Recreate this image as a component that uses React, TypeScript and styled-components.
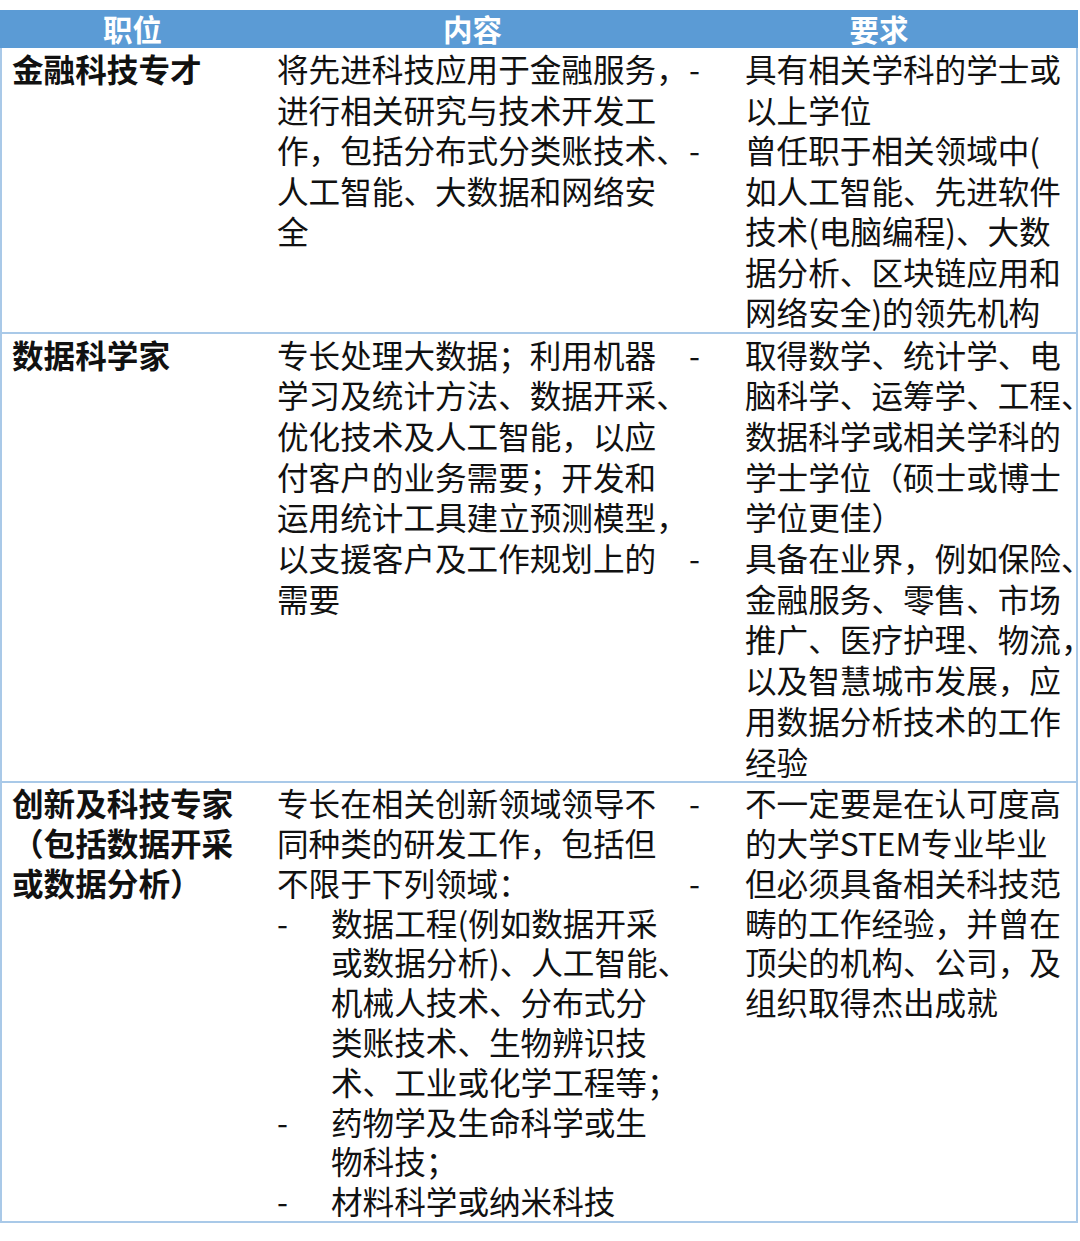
import { Fragment } from 'react';
import styled, { createGlobalStyle } from 'styled-components';

const GlobalStyle = createGlobalStyle`
  body {
    margin: 0;
    background: #ffffff;
    font-family: "Noto Sans CJK SC", "Noto Sans", sans-serif;
    color: #111111;
  }
`;

interface ListItem {
  lines: string[];
}

interface RowData {
  title: string[];
  content: string[];
  subList?: ListItem[];
  requirements: ListItem[];
  lineHeight: number;
}

const rows: RowData[] = [
  {
    title: ['金融科技专才'],
    lineHeight: 40.5,
    content: [
      '将先进科技应用于金融服务，',
      '进行相关研究与技术开发工',
      '作，包括分布式分类账技术、',
      '人工智能、大数据和网络安',
      '全',
    ],
    requirements: [
      { lines: ['具有相关学科的学士或', '以上学位'] },
      {
        lines: [
          '曾任职于相关领域中(',
          '如人工智能、先进软件',
          '技术(电脑编程)、大数',
          '据分析、区块链应用和',
          '网络安全)的领先机构',
        ],
      },
    ],
  },
  {
    title: ['数据科学家'],
    lineHeight: 40.7,
    content: [
      '专长处理大数据；利用机器',
      '学习及统计方法、数据开采、',
      '优化技术及人工智能，以应',
      '付客户的业务需要；开发和',
      '运用统计工具建立预测模型，',
      '以支援客户及工作规划上的',
      '需要',
    ],
    requirements: [
      {
        lines: [
          '取得数学、统计学、电',
          '脑科学、运筹学、工程、',
          '数据科学或相关学科的',
          '学士学位（硕士或博士',
          '学位更佳）',
        ],
      },
      {
        lines: [
          '具备在业界，例如保险、',
          '金融服务、零售、市场',
          '推广、医疗护理、物流，',
          '以及智慧城市发展，应',
          '用数据分析技术的工作',
          '经验',
        ],
      },
    ],
  },
  {
    title: ['创新及科技专家', '（包括数据开采', '或数据分析）'],
    lineHeight: 39.8,
    content: ['专长在相关创新领域领导不', '同种类的研发工作，包括但', '不限于下列领域：'],
    subList: [
      {
        lines: [
          '数据工程(例如数据开采',
          '或数据分析)、人工智能、',
          '机械人技术、分布式分',
          '类账技术、生物辨识技',
          '术、工业或化学工程等；',
        ],
      },
      { lines: ['药物学及生命科学或生', '物科技；'] },
      { lines: ['材料科学或纳米科技'] },
    ],
    requirements: [
      { lines: ['不一定要是在认可度高', '的大学STEM专业毕业'] },
      {
        lines: [
          '但必须具备相关科技范',
          '畴的工作经验，并曾在',
          '顶尖的机构、公司，及',
          '组织取得杰出成就',
        ],
      },
    ],
  },
];

const Table = styled.div`
  margin-top: 10px;
  width: 1078px;
  display: grid;
  grid-template-columns: 265px 415px 398px;
  overflow: hidden;
  font-size: 31.6px;
`;

const HeaderCell = styled.div`
  height: 38px;
  background: #5b9bd5;
  color: #ffffff;
  font-weight: 700;
  font-size: 29.5px;
  display: flex;
  align-items: center;
  justify-content: center;
  line-height: 1;
`;

const Cell = styled.div<{ $first?: boolean; $last?: boolean; $pad: number; $lh: number }>`
  padding: 0 0 0 ${p => p.$pad}px;
  line-height: ${p => p.$lh}px;
  border-bottom: 2px solid #a9c9e8;
  border-left: ${p => (p.$first ? '2px solid #a9c9e8' : 'none')};
  border-right: ${p => (p.$last ? '2px solid #a9c9e8' : 'none')};
  min-width: 0;
`;

const Line = styled.div<{ $bold?: boolean }>`
  white-space: nowrap;
  font-weight: ${p => (p.$bold ? 700 : 400)};
`;

const Item = styled.div<{ $dashWidth: number }>`
  display: grid;
  grid-template-columns: ${p => p.$dashWidth}px 1fr;
`;

const Dash = styled.span`
  white-space: nowrap;
`;

function DashList({ items, dashWidth }: { items: ListItem[]; dashWidth: number }) {
  return (
    <div>
      {items.map((item, i) => (
        <Item key={i} $dashWidth={dashWidth}>
          <Dash>-</Dash>
          <div>
            {item.lines.map((l, j) => (
              <Line key={j}>{l}</Line>
            ))}
          </div>
        </Item>
      ))}
    </div>
  );
}

export default function App() {
  return (
    <>
      <GlobalStyle />
      <Table>
        <HeaderCell>职位</HeaderCell>
        <HeaderCell>内容</HeaderCell>
        <HeaderCell>要求</HeaderCell>
        {rows.map((row, i) => (
          <Fragment key={i}>
            <Cell $first $pad={10} $lh={row.lineHeight}>
              {row.title.map((t, j) => (
                <Line key={j} $bold>
                  {t}
                </Line>
              ))}
            </Cell>
            <Cell $pad={12} $lh={row.lineHeight}>
              {row.content.map((c, j) => (
                <Line key={j}>{c}</Line>
              ))}
              {row.subList && <DashList items={row.subList} dashWidth={54} />}
            </Cell>
            <Cell $last $pad={9} $lh={row.lineHeight}>
              <DashList items={row.requirements} dashWidth={56} />
            </Cell>
          </Fragment>
        ))}
      </Table>
    </>
  );
}
